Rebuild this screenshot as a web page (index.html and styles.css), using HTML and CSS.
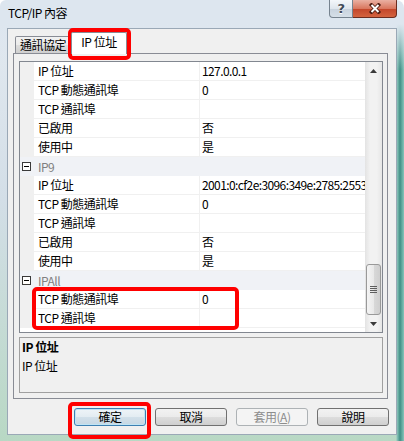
FILE: index.html
```html
<!DOCTYPE html>
<html lang="zh-Hant">
<head>
    <meta charset="UTF-8">
    <meta name="viewport" content="width=device-width, initial-scale=1.0">
    <title>TCP/IP 內容</title>
    <link rel="stylesheet" href="styles.css">
</head>
<body>
    <!-- Title bar -->
    <div class="titlebar">
        <span class="title">TCP/IP 內容</span>
        <div class="caption">
            <span class="cap cap-help">?</span>
            <span class="cap cap-close">
                <svg width="14" height="11" viewBox="0 0 14 11">
                    <path d="M3.5 2 L10.5 9 M10.5 2 L3.5 9" stroke="#4a1a10" stroke-width="3.6" stroke-linecap="square"/>
                    <path d="M3.5 2 L10.5 9 M10.5 2 L3.5 9" stroke="#fff" stroke-width="2"/>
                </svg>
            </span>
        </div>
    </div>

    <div class="client">
        <!-- Tabs -->
        <div class="tabs">
            <span class="tab">通訊協定</span>
            <span class="tab tab-selected">IP 位址</span>
        </div>

        <div class="tabpanel">
            <!-- Property grid -->
            <div class="grid">
                <div class="rows">
                    <div class="row"><span class="margin"></span><span class="name">IP 位址</span><span class="value">127.0.0.1</span></div>
                    <div class="row"><span class="margin"></span><span class="name">TCP 動態通訊埠</span><span class="value">0</span></div>
                    <div class="row"><span class="margin"></span><span class="name">TCP 通訊埠</span><span class="value"></span></div>
                    <div class="row"><span class="margin"></span><span class="name">已啟用</span><span class="value">否</span></div>
                    <div class="row"><span class="margin"></span><span class="name">使用中</span><span class="value">是</span></div>
                    <div class="category"><span class="minus"></span><span class="cat-label">IP9</span></div>
                    <div class="row"><span class="margin"></span><span class="name">IP 位址</span><span class="value">2001:0:cf2e:3096:349e:2785:2553</span></div>
                    <div class="row"><span class="margin"></span><span class="name">TCP 動態通訊埠</span><span class="value">0</span></div>
                    <div class="row"><span class="margin"></span><span class="name">TCP 通訊埠</span><span class="value"></span></div>
                    <div class="row"><span class="margin"></span><span class="name">已啟用</span><span class="value">否</span></div>
                    <div class="row"><span class="margin"></span><span class="name">使用中</span><span class="value">是</span></div>
                    <div class="category"><span class="minus"></span><span class="cat-label">IPAll</span></div>
                    <div class="row"><span class="margin"></span><span class="name">TCP 動態通訊埠</span><span class="value">0</span></div>
                    <div class="row"><span class="margin"></span><span class="name">TCP 通訊埠</span><span class="value"></span></div>
                </div>
                <div class="scrollbar">
                    <span class="sb-btn">
                        <svg width="7" height="4" viewBox="0 0 7 4"><polygon points="0,4 3.5,0 7,4" fill="#3a3a3a"/></svg>
                    </span>
                    <div class="sb-track">
                        <span class="sb-thumb">
                            <svg width="7" height="8" viewBox="0 0 7 8">
                                <rect x="0" y="0" width="7" height="1" fill="#5e5e5e"/>
                                <rect x="0" y="2" width="7" height="1" fill="#5e5e5e"/>
                                <rect x="0" y="4" width="7" height="1" fill="#5e5e5e"/>
                                <rect x="0" y="6" width="7" height="1" fill="#5e5e5e"/>
                            </svg>
                        </span>
                    </div>
                    <span class="sb-btn">
                        <svg width="7" height="4" viewBox="0 0 7 4"><polygon points="0,0 7,0 3.5,4" fill="#3a3a3a"/></svg>
                    </span>
                </div>
            </div>

            <!-- Description -->
            <div class="desc">
                <div class="desc-title">IP 位址</div>
                <div class="desc-text">IP 位址</div>
            </div>
        </div>

        <!-- Dialog buttons -->
        <div class="buttons">
            <button type="button" class="btn btn-default">確定</button>
            <button type="button" class="btn">取消</button>
            <button type="button" class="btn btn-disabled" disabled>套用(<u>A</u>)</button>
            <button type="button" class="btn">說明</button>
        </div>
    </div>

    <!-- Red annotation boxes -->
    <div class="mark mark-tab"></div>
    <div class="mark mark-rows"></div>
    <div class="mark mark-ok"></div>
</body>
</html>
```

FILE: styles.css
```css
* {
    box-sizing: border-box;
}
html {
    background: #fff;
}
body {
    margin: 0;
    width: 404px;
    height: 441px;
    overflow: hidden;
    position: relative;
    border-radius: 6px 8px 0 0;
    font-family: "Noto Sans CJK TC", "Noto Sans", sans-serif;
    font-size: 12px;
    letter-spacing: -0.5px;
    color: #000;
    background:
        linear-gradient(to bottom, #dde6ef 0, #dde6ef 24px, rgba(221, 230, 239, 0) 70px),
        linear-gradient(to right, rgba(0, 0, 0, 0) 396px, #8cc4ba 397px, #3f8f85 400px, #86c5ba 404px),
        linear-gradient(to bottom, #d9e3ed, #e2e9f0 28px, #d3dee7 200px, #b8d8c4 441px);
}

/* Title bar */
.titlebar {
    height: 28px;
    display: flex;
    justify-content: space-between;
    align-items: flex-start;
}
.title {
    padding: 6px 0 0 8px;
    line-height: 14px;
}
.caption {
    display: flex;
    margin-right: 7px;
}
.cap {
    height: 18px;
    display: flex;
    align-items: center;
    justify-content: center;
}
.cap-help {
    width: 24px;
    border: 1px solid #76838f;
    border-top: none;
    border-radius: 0 0 0 4px;
    background: linear-gradient(#f4f7fa, #dfe6ed 50%, #c7d2dd 51%, #d6dfe8);
    color: #3f4b58;
    font-family: "DejaVu Sans", sans-serif;
    font-weight: bold;
    font-size: 13px;
    text-shadow: 0 1px 0 #fff;
}
.cap-close {
    width: 44px;
    border: 1px solid #6b2c1f;
    border-left: none;
    border-top: none;
    border-radius: 0 0 4px 0;
    background: linear-gradient(#eab0a2, #d9775f 50%, #c2452a 51%, #d4633f);
}

/* Client area */
.client {
    margin: 0 7px;
    height: 407px;
    border: 1px solid #9aa8b6;
    background: #f0f0f0;
    display: flex;
    flex-direction: column;
}

/* Tabs */
.tabs {
    height: 24px;
    display: flex;
    align-items: flex-end;
    padding-left: 7px;
}
.tab {
    width: 56px;
    height: 17px;
    border: 1px solid #898c95;
    border-bottom: none;
    border-radius: 2px 2px 0 0;
    background: linear-gradient(#f2f2f2, #ebebeb 50%, #dddddd 51%, #cfcfcf);
    line-height: 16px;
    text-align: center;
}
.tab-selected {
    width: 56px;
    height: 22px;
    margin-bottom: -1px;
    padding-top: 1px;
    background: #fff;
    position: relative;
    z-index: 1;
}

/* Tab panel */
.tabpanel {
    margin: 0 8px 0 5px;
    height: 346px;
    border: 1px solid #898c95;
    background: #f0f0f0;
    padding: 7px 4px 5px 5px;
    display: flex;
    flex-direction: column;
    gap: 4px;
}

/* Property grid */
.grid {
    height: 272px;
    border: 1px solid #828790;
    background: #fff;
    display: flex;
}
.rows {
    flex: 1;
    overflow: hidden;
}
.row {
    display: grid;
    grid-template-columns: 14px 166px 1fr;
    height: 19px;
    line-height: 18px;
}
.margin {
    background: #f0f0f0;
}
.name {
    padding-left: 4px;
    border-bottom: 1px solid #f0f0f0;
    border-right: 1px solid #f0f0f0;
    white-space: nowrap;
}
.value {
    padding-left: 2px;
    border-bottom: 1px solid #f0f0f0;
    letter-spacing: -0.6px;
    white-space: nowrap;
    overflow: hidden;
}
.category {
    height: 19px;
    display: flex;
    align-items: center;
    background: #f0f2f6;
}
.minus {
    width: 9px;
    height: 9px;
    margin-left: 2px;
    border: 1px solid #3a3a3a;
    background: #fff;
    display: flex;
    align-items: center;
    justify-content: center;
}
.minus::before {
    content: "";
    width: 5px;
    height: 1px;
    background: #000;
}
.cat-label {
    margin-left: 7px;
    color: #808080;
    line-height: 18px;
}

/* Scrollbar */
.scrollbar {
    width: 17px;
    display: flex;
    flex-direction: column;
    background: linear-gradient(to right, #e3e3e3, #f2f2f2 30%, #f2f2f2 70%, #e6e6e6);
}
.sb-btn {
    height: 17px;
    display: flex;
    align-items: center;
    justify-content: center;
}
.sb-track {
    flex: 1;
    display: flex;
    flex-direction: column;
    justify-content: flex-end;
}
.sb-thumb {
    height: 51px;
    margin: 0 1px;
    border: 1px solid #999;
    border-radius: 3px;
    background: linear-gradient(to right, #f4f4f4, #e9e9e9 50%, #d9d9d9 51%, #cfcfcf);
    display: flex;
    align-items: center;
    justify-content: center;
}

/* Description panel */
.desc {
    height: 56px;
    border: 1px solid #a0a0a0;
    background: #f0f0f0;
    padding: 2px 2px 0;
}
.desc-title {
    font-weight: bold;
    line-height: 14px;
}
.desc-text {
    margin-top: 5px;
    line-height: 14px;
}

/* Buttons */
.buttons {
    display: flex;
    justify-content: flex-end;
    gap: 9px;
    padding: 9px 7px 0 0;
}
.btn {
    width: 72px;
    height: 18px;
    padding: 0;
    border: 1px solid #707070;
    border-radius: 3px;
    background: linear-gradient(#f2f2f2, #ebebeb 50%, #dddddd 51%, #cfcfcf);
    font: inherit;
    letter-spacing: inherit;
    color: #000;
    line-height: 16px;
}
.btn-default {
    border-color: #3c7fb1;
    background: linear-gradient(#eef4f8, #e3ecf2 50%, #d2e0ea 51%, #c6d7e3);
    box-shadow: inset 0 0 0 1px #bfe4f5;
}
.btn-disabled {
    border-color: #adb2b5;
    background: #f4f4f4;
    color: #8d8d8d;
}

/* Red annotation marks */
.mark {
    position: absolute;
    border: 4px solid #f00;
    border-radius: 5px;
}
.mark-tab {
    left: 68px;
    top: 28px;
    width: 63px;
    height: 32px;
}
.mark-rows {
    left: 32px;
    top: 287px;
    width: 207px;
    height: 43px;
}
.mark-ok {
    left: 68px;
    top: 402px;
    width: 83px;
    height: 37px;
}
```
